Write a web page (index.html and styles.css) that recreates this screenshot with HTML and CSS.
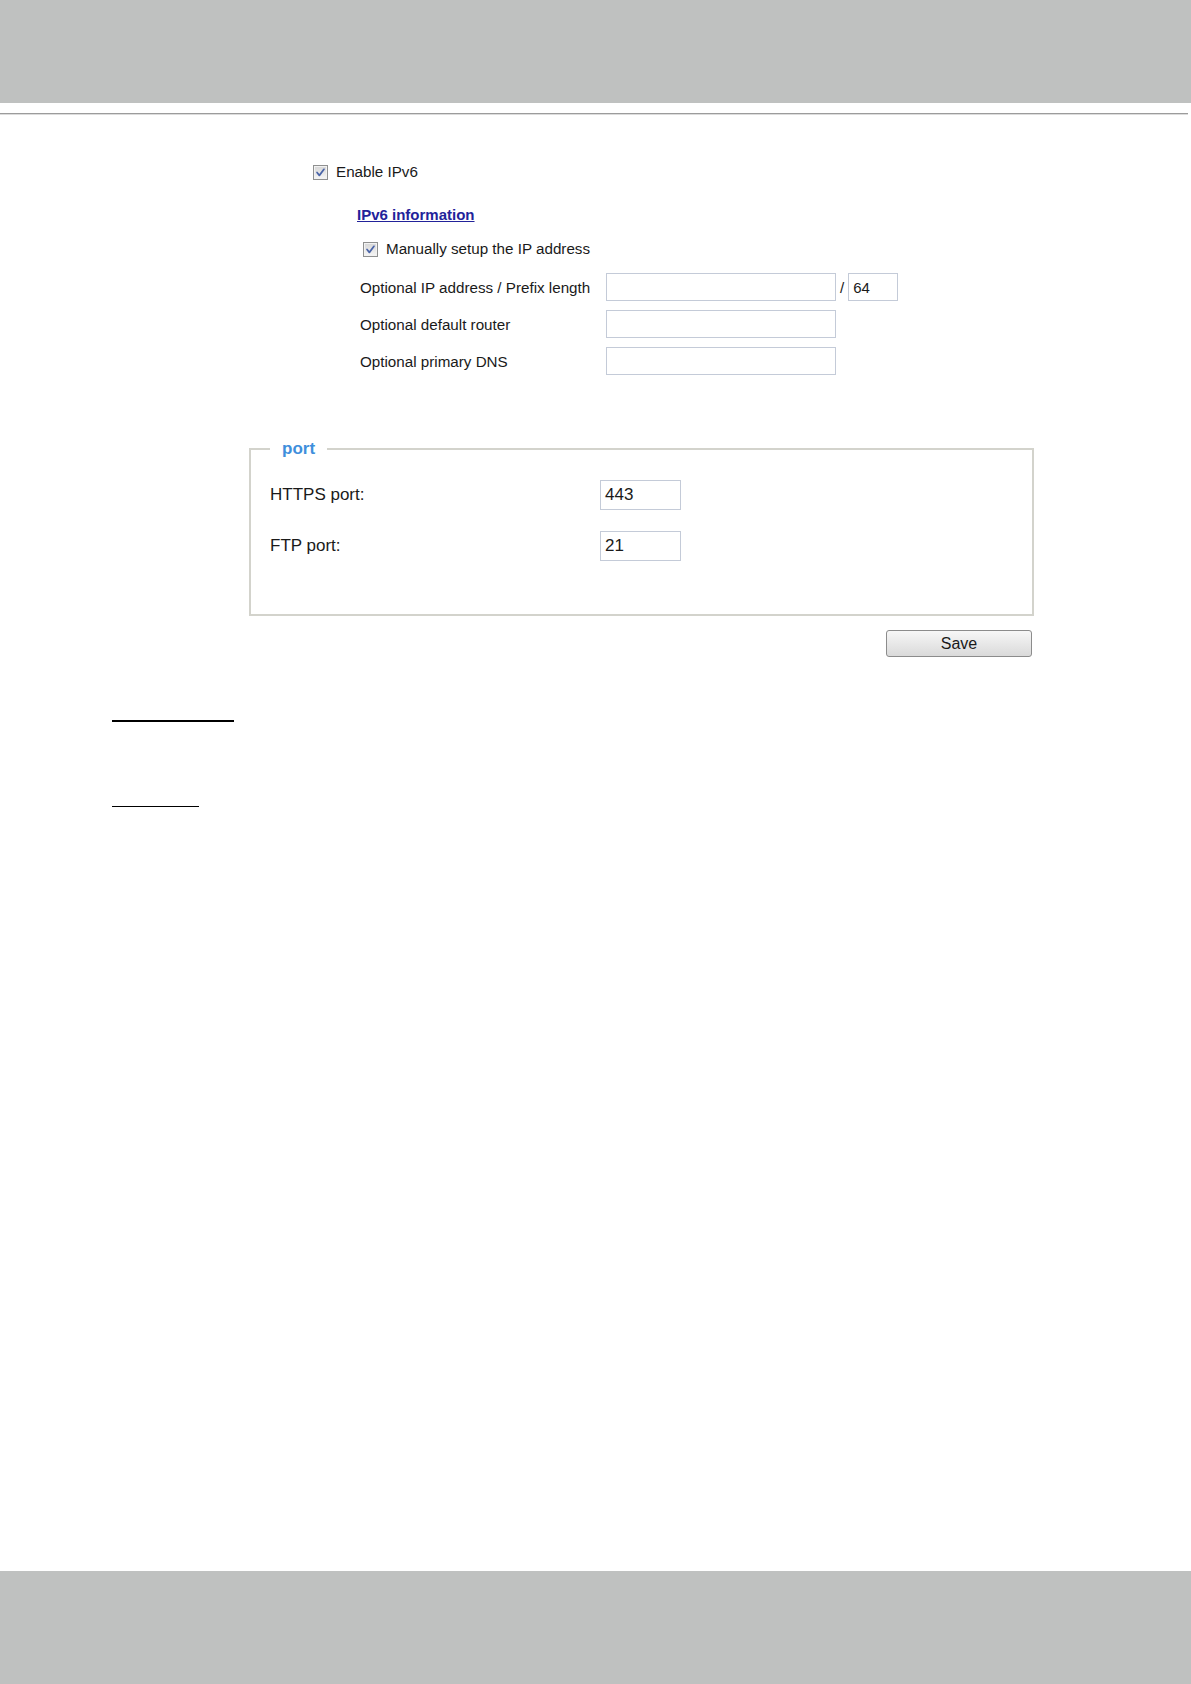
FILE: index.html
```html
<!DOCTYPE html>
<html lang="en">
<head>
<meta charset="utf-8">
<title>Network settings</title>
<link rel="stylesheet" href="styles.css">
</head>
<body>
<div class="page">
  <header class="topbar"></header>
  <div class="rule"></div>

  <main class="content">
    <section class="ipv6">
      <label class="check-row">
        <span class="checkbox"><svg viewBox="0 0 15 15" width="15" height="15"><path d="M3.5 7.5 L6.2 10.8 L11.5 3.8" fill="none" stroke="#4a64a8" stroke-width="2" stroke-linecap="round" stroke-linejoin="round"/></svg></span>
        <span class="label-text">Enable IPv6</span>
      </label>

      <div class="sub">
        <a class="info-link" href="#">IPv6 information</a>

        <label class="check-row manual">
          <span class="checkbox"><svg viewBox="0 0 15 15" width="15" height="15"><path d="M3.5 7.5 L6.2 10.8 L11.5 3.8" fill="none" stroke="#4a64a8" stroke-width="2" stroke-linecap="round" stroke-linejoin="round"/></svg></span>
          <span class="label-text">Manually setup the IP address</span>
        </label>

        <div class="ip-grid">
          <span class="field-label">Optional IP address / Prefix length</span>
          <div class="field-inputs">
            <span class="text-input wide"></span>
            <span class="slash">/</span>
            <span class="text-input prefix">64</span>
          </div>

          <span class="field-label">Optional default router</span>
          <div class="field-inputs"><span class="text-input wide"></span></div>

          <span class="field-label">Optional primary DNS</span>
          <div class="field-inputs"><span class="text-input wide"></span></div>
        </div>
      </div>
    </section>

    <section class="port-section">
      <fieldset class="port-box">
        <legend class="port-legend">port</legend>
        <div class="port-grid">
          <span class="port-label">HTTPS port:</span>
          <span class="text-input port-input">443</span>
          <span class="port-label">FTP port:</span>
          <span class="text-input port-input">21</span>
        </div>
      </fieldset>
      <div class="actions">
        <button class="save-btn" type="button">Save</button>
      </div>
    </section>

    <div class="underline long"></div>
    <div class="underline short"></div>
  </main>

  <footer class="bottombar"></footer>
</div>
</body>
</html>
```

FILE: styles.css
```css
html, body {
  margin: 0;
  padding: 0;
  background: #ffffff;
}

body {
  font-family: "Liberation Sans", Arial, sans-serif;
  color: #1a1a1a;
}

.page {
  min-height: 1684px;
  display: flex;
  flex-direction: column;
}

.topbar {
  height: 103px;
  background: #bfc1c0;
}

.rule {
  margin-top: 10px;
  width: 1188px;
  height: 1px;
  background: #9c9c9c;
  border-bottom: 1px solid #dcdcdc;
}

.content {
  flex: 1;
}

/* IPv6 block */
.ipv6 {
  margin: 48px 0 0 313px;
}

.check-row {
  display: flex;
  align-items: center;
  gap: 8px;
  height: 18px;
  font-size: 15.2px;
}

.checkbox {
  width: 13px;
  height: 13px;
  border: 1px solid #8f9090;
  background: linear-gradient(#d6d6d6, #f6f6f6);
  box-shadow: inset 0 0 0 1px #f2f2f2;
  display: flex;
  align-items: center;
  justify-content: center;
  flex: none;
}

.checkbox svg {
  width: 13px;
  height: 13px;
}

.label-text {
  line-height: 18px;
}

.sub {
  margin-left: 44px;
}

.info-link {
  display: block;
  margin-top: 25px;
  width: max-content;
  font-size: 15px;
  font-weight: bold;
  line-height: 18px;
  color: #22229a;
  text-decoration: underline;
}

.check-row.manual {
  margin: 16px 0 0 6px;
}

.ip-grid {
  margin: 15px 0 0 3px;
  display: grid;
  grid-template-columns: 246px auto;
  row-gap: 9px;
  align-items: center;
  font-size: 15.2px;
}

.field-inputs {
  display: flex;
  align-items: center;
}

.text-input {
  box-sizing: border-box;
  height: 28px;
  border: 1px solid #c4cbd8;
  background: #fff;
  display: flex;
  align-items: center;
  padding-left: 4px;
  color: #1a1a1a;
}

.text-input.wide {
  width: 230px;
}

.slash {
  margin: 0 4px 0 4px;
}

.text-input.prefix {
  width: 50px;
  font-size: 15px;
}

/* Port block */
.port-section {
  margin: 64px 0 0 249px;
  width: 785px;
}

.port-box {
  box-sizing: border-box;
  width: 785px;
  margin: 0;
  border: 2px solid #d3d3cc;
  padding: 21px 19px 53px 19px;
}

.port-legend {
  padding: 0 12px;
  font-size: 17px;
  font-weight: bold;
  line-height: 20px;
  color: #3f8fdc;
}

.port-grid {
  display: grid;
  grid-template-columns: 330px 81px;
  row-gap: 21px;
  align-items: center;
  font-size: 17px;
}

.port-label {
  color: #1a1a1a;
}

.text-input.port-input {
  width: 81px;
  height: 30px;
  font-size: 17px;
  padding-left: 4px;
}

.actions {
  display: flex;
  justify-content: flex-end;
  margin-top: 14px;
  padding-right: 2px;
}

.save-btn {
  box-sizing: border-box;
  width: 146px;
  height: 27px;
  border: 1px solid #8c8c8c;
  border-radius: 3px;
  background: linear-gradient(#f7f7f7, #e8e8e8 50%, #dadada);
  font-family: "Liberation Sans", Arial, sans-serif;
  font-size: 16px;
  color: #1a1a1a;
  padding: 0;
}

/* underlines */
.underline {
  margin-left: 112px;
  background: #000;
}

.underline.long {
  margin-top: 63px;
  width: 122px;
  height: 2px;
}

.underline.short {
  margin-top: 84px;
  width: 87px;
  height: 1px;
}

.bottombar {
  height: 113px;
  background: #bfc1c0;
}
```
